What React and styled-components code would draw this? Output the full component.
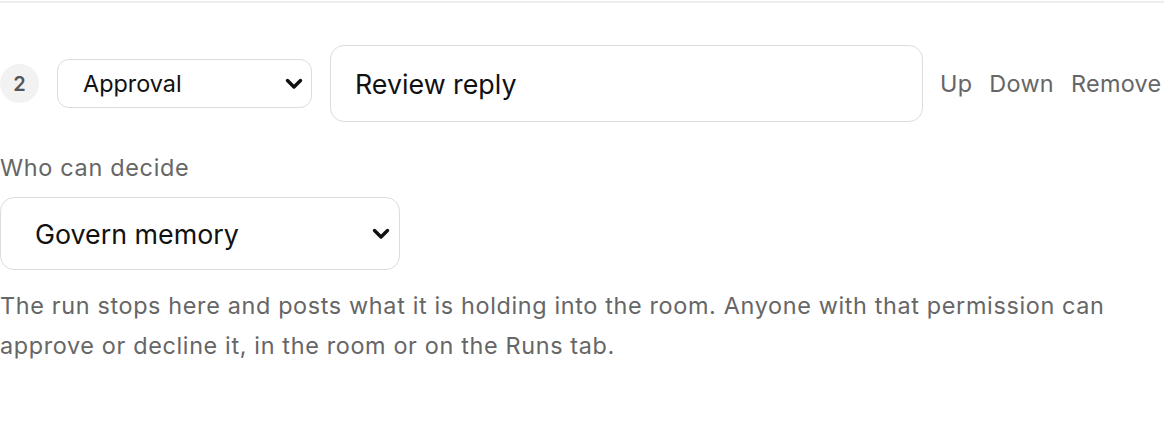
import React from "react";
import styled, { createGlobalStyle } from "styled-components";

const Global = createGlobalStyle`
  html, body { margin: 0; padding: 0; background: #fff; }
  body { font-family: Inter, "Noto Sans", "Liberation Sans", sans-serif; color: #111; }
  * { box-sizing: border-box; }
`;

const Panel = styled.div`
  margin-top: 1px;
  border-top: 2px solid #eeeeee;
  padding: 42px 0 0;
  width: 1164px;
`;

const StepRow = styled.div`
  display: flex; align-items: center; gap: 18px;
`;

const Badge = styled.span`
  flex: none; width: 39px; height: 39px; border-radius: 50%;
  background: #f2f2f2; color: #555; font-size: 20px; font-weight: 600;
  display: flex; align-items: center; justify-content: center;
`;

const SelectWrap = styled.div`
  position: relative; flex: none; width: ${p => p.$w}px;
`;

const Select = styled.select`
  appearance: none; -webkit-appearance: none;
  width: 100%; height: ${p => p.$h}px;
  border: 1.5px solid #dcdcdc; border-radius: ${p => p.$r}px; background: #fff;
  font-family: inherit; font-size: ${p => p.$fs}px; color: #111;
  padding: 0 40px 0 ${p => p.$pl}px; outline: none;
`;

const Chevron = styled.svg`
  position: absolute; top: 50%; right: ${p => p.$right}px;
  transform: translateY(-50%); pointer-events: none;
`;

const TitleInput = styled.input`
  flex: none; width: 593px; height: 77px;
  border: 1.5px solid #dcdcdc; border-radius: 14px; background: #fff;
  font-family: inherit; font-size: 26.8px; color: #111;
  padding: 0 24px; outline: none;
`;

const Actions = styled.div`
  display: flex; gap: 17px; margin-left: -1px;
`;

const TextButton = styled.button`
  border: none; background: none; padding: 0; cursor: pointer;
  font-family: inherit; font-size: 23.4px; letter-spacing: 0.3px; color: #666;
`;

const Field = styled.div`
  margin-top: 31px; display: flex; flex-direction: column; gap: 15px;
`;

const Label = styled.label`
  font-size: 23.4px; letter-spacing: 0.7px; color: #666;
`;

const Hint = styled.p`
  margin: 16px 0 0; font-size: 23.4px; letter-spacing: 0.65px; line-height: 40px; color: #666;
  max-width: 1164px;
`;

function ChevronIcon({ right }) {
  return (
    <Chevron $right={right} width="18" height="12" viewBox="0 0 18 12">
      <path d="M2.5 2.5 L9 9 L15.5 2.5" fill="none" stroke="#111" strokeWidth="3.4" strokeLinecap="round" strokeLinejoin="round" />
    </Chevron>
  );
}

export default function App() {
  return (
    <>
      <Global />
      <Panel>
        <StepRow>
          <Badge>2</Badge>
          <SelectWrap $w={255}>
            <Select $h={49} $r={12} $fs={23.4} $pl={25} defaultValue="approval">
              <option value="approval">Approval</option>
              <option value="action">Action</option>
            </Select>
            <ChevronIcon right={9} />
          </SelectWrap>
          <TitleInput defaultValue="Review reply" />
          <Actions>
            <TextButton>Up</TextButton>
            <TextButton>Down</TextButton>
            <TextButton>Remove</TextButton>
          </Actions>
        </StepRow>
        <Field>
          <Label>Who can decide</Label>
          <SelectWrap $w={400}>
            <Select $h={73} $r={14} $fs={26.8} $pl={34} defaultValue="memory">
              <option value="memory">Govern memory</option>
              <option value="admin">Admin</option>
            </Select>
            <ChevronIcon right={10} />
          </SelectWrap>
        </Field>
        <Hint>
          The run stops here and posts what it is holding into the room. Anyone with that permission can approve or decline it, in the room or on the Runs tab.
        </Hint>
      </Panel>
    </>
  );
}
